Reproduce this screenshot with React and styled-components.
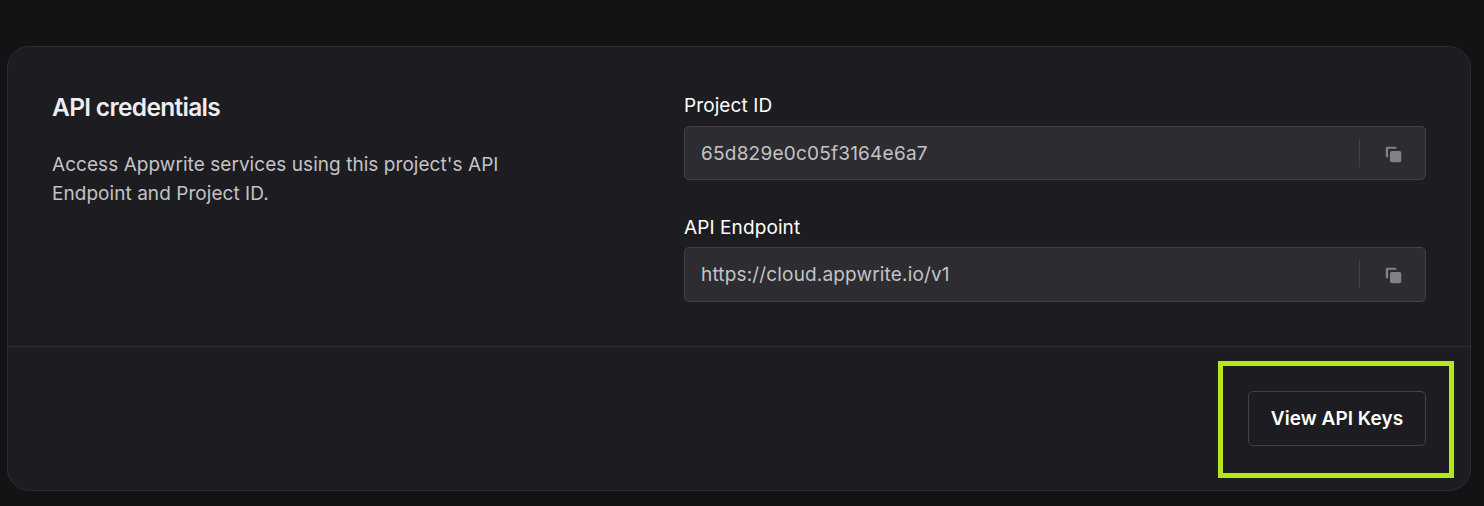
import React from "react";
import styled, { createGlobalStyle } from "styled-components";

const GlobalStyle = createGlobalStyle`
  * { box-sizing: border-box; }
  body {
    margin: 0;
    background: #131315;
    font-family: Inter, "Liberation Sans", sans-serif;
  }
`;

const Page = styled.main`
  height: 506px;
  padding: 46px 13px 0 7px;
`;

const Card = styled.section`
  height: 445px;
  border: 1px solid #2c2c31;
  border-radius: 22px;
  background: #1d1c21;
`;

const CardBody = styled.div`
  display: grid;
  grid-template-columns: 632px 742px;
  height: 299px;
  padding-left: 44px;
`;

const Summary = styled.div`
  padding-top: 44px;
`;

const Title = styled.h2`
  margin: 0;
  color: #ededf0;
  font-size: 24.5px;
  font-weight: 600;
  line-height: 32px;
  letter-spacing: -0.68px;
`;

const Description = styled.p`
  margin: 27px 0 0;
  color: #c3c3c6;
  font-size: 19px;
  line-height: 29px;
  letter-spacing: 0.05px;
`;

const Fields = styled.div`
  padding-top: 44px;
  display: flex;
  flex-direction: column;
  gap: 33px;
`;

const Label = styled.label`
  display: block;
  height: ${({ $height }) => $height}px;
  color: #fff;
  font-size: 19px;
  line-height: 29px;
  letter-spacing: 0.1px;
`;

const InputBox = styled.div`
  display: flex;
  align-items: flex-start;
  height: ${({ $height }) => $height}px;
  padding: 12px 0 0 16px;
  border: 1px solid #414146;
  border-radius: 5px;
  background: #2d2c31;
`;

const Value = styled.span`
  flex: 1;
  color: #c3c3c6;
  font-size: 19px;
  line-height: 30px;
  letter-spacing: ${({ $spacing }) => $spacing}px;
`;

const CopyButton = styled.button`
  display: flex;
  align-items: center;
  justify-content: center;
  width: 66px;
  height: 28px;
  padding: 2px 0 0;
  border: 0;
  border-left: 1px solid #414146;
  background: none;
  color: #818186;
`;

const CardFooter = styled.footer`
  display: flex;
  justify-content: flex-end;
  height: 144px;
  padding: 14px 16px 0 0;
  border-top: 1px solid #2c2c31;
`;

const Highlight = styled.div`
  width: 236px;
  height: 117px;
  padding: 25px 0 0 25px;
  border: 5px solid #b5e61d;
`;

const KeysButton = styled.button`
  display: block;
  width: 178px;
  height: 55px;
  padding: 0;
  border: 1px solid #414146;
  border-radius: 5px;
  background: transparent;
  color: #fff;
  font-family: inherit;
  font-size: 19px;
  font-weight: 600;
  letter-spacing: 0.05px;
`;

function CopyIcon() {
  return (
    <svg width="18" height="18" viewBox="0 0 18 18" fill="currentColor" aria-hidden="true">
      <path d="M3.2 1.8H11a1.7 1.7 0 0 1 1.6 1.9H4.1v8.7a1.8 1.8 0 0 1-2.3-1.6V3.2a1.4 1.4 0 0 1 1.4-1.4Z" />
      <rect x="6" y="6" width="11.3" height="11.2" rx="2" />
    </svg>
  );
}

function Field({ label, value, labelHeight, height, spacing }) {
  return (
    <div>
      <Label $height={labelHeight}>{label}</Label>
      <InputBox $height={height}>
        <Value $spacing={spacing}>{value}</Value>
        <CopyButton aria-label={`Copy ${label}`}><CopyIcon /></CopyButton>
      </InputBox>
    </div>
  );
}

export default function App() {
  return (
    <Page>
      <GlobalStyle />
      <Card>
        <CardBody>
          <Summary>
            <Title>API credentials</Title>
            <Description>
              Access Appwrite services using this project's API<br />Endpoint and Project ID.
            </Description>
          </Summary>
          <Fields>
            <Field label="Project ID" value="65d829e0c05f3164e6a7" labelHeight={35} height={54} spacing={0.22} />
            <Field label="API Endpoint" value="https://cloud.appwrite.io/v1" labelHeight={34} height={55} spacing={0.16} />
          </Fields>
        </CardBody>
        <CardFooter>
          <Highlight><KeysButton>View API Keys</KeysButton></Highlight>
        </CardFooter>
      </Card>
    </Page>
  );
}
